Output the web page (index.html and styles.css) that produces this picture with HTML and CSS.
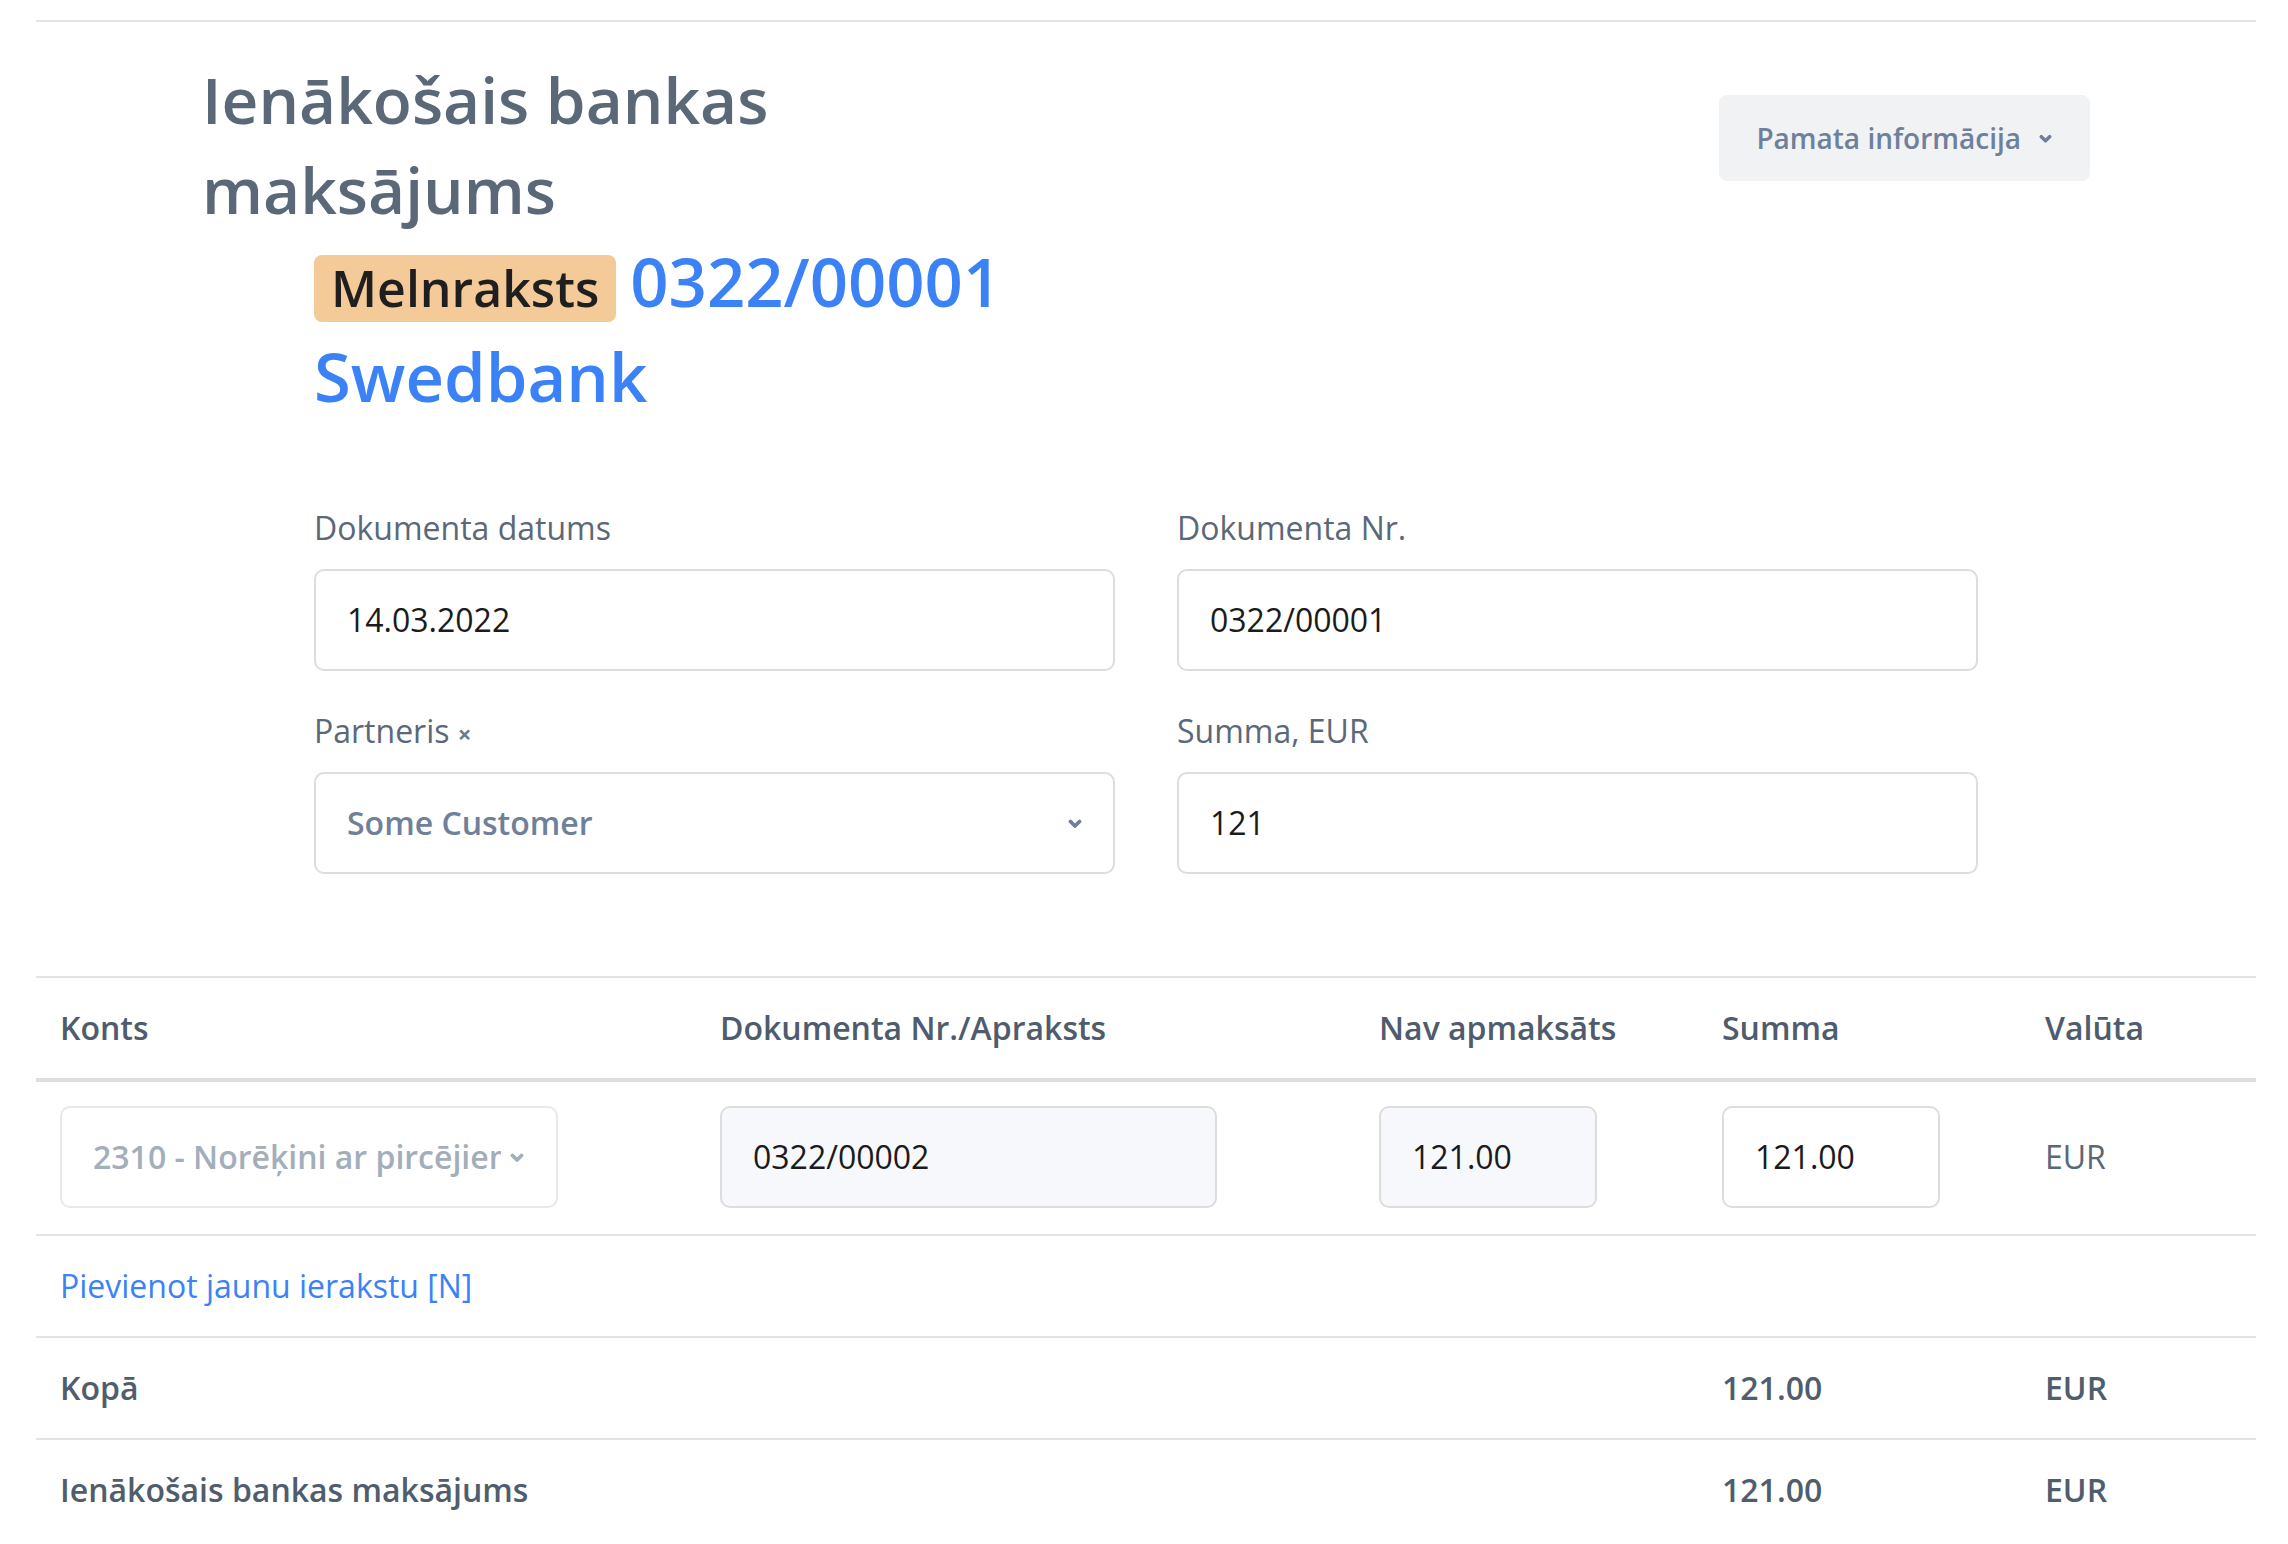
FILE: index.html
```html
<!DOCTYPE html>
<html lang="lv">
<head>
<meta charset="utf-8">
<title>Ienākošais bankas maksājums</title>
<link rel="stylesheet" href="styles.css">
</head>
<body>
<div class="page">
  <header class="page-head">
    <h1 class="title">Ienākošais bankas maksājums</h1>
    <button class="info-btn" type="button">
      <span>Pamata informācija</span>
      <svg class="chev chev-sm" viewBox="0 0 14 9" aria-hidden="true"><path d="M2.5 2.5l4.5 4.5 4.5-4.5"/></svg>
    </button>
  </header>

  <section class="doc">
    <div class="doc-title"><span class="badge">Melnraksts</span><span class="doc-no">0322/00001</span><span class="bank">Swedbank</span></div>

    <div class="form-grid">
      <div class="field">
        <div class="label">Dokumenta datums</div>
        <div class="input">14.03.2022</div>
      </div>
      <div class="field">
        <div class="label">Dokumenta Nr.</div>
        <div class="input">0322/00001</div>
      </div>
      <div class="field">
        <div class="label">Partneris <span class="clear">×</span></div>
        <div class="input select">
          <span class="select-value">Some Customer</span>
          <svg class="chev" viewBox="0 0 14 9" aria-hidden="true"><path d="M2.5 2.5l4.5 4.5 4.5-4.5"/></svg>
        </div>
      </div>
      <div class="field">
        <div class="label">Summa, EUR</div>
        <div class="input">121</div>
      </div>
    </div>
  </section>

  <div class="ledger">
    <div class="row head">
      <div class="cell">Konts</div>
      <div class="cell">Dokumenta Nr./Apraksts</div>
      <div class="cell">Nav apmaksāts</div>
      <div class="cell">Summa</div>
      <div class="cell">Valūta</div>
    </div>
    <div class="row line">
      <div class="cell">
        <div class="input small account">
          <span class="account-text">2310 - Norēķini ar pircējiem</span>
          <svg class="chev" viewBox="0 0 14 9" aria-hidden="true"><path d="M2.5 2.5l4.5 4.5 4.5-4.5"/></svg>
        </div>
      </div>
      <div class="cell">
        <div class="input small readonly w-doc">0322/00002</div>
      </div>
      <div class="cell">
        <div class="input small readonly w-num">121.00</div>
      </div>
      <div class="cell">
        <div class="input small w-num">121.00</div>
      </div>
      <div class="cell currency">EUR</div>
    </div>
    <div class="row add">
      <div class="cell span-all"><a class="add-link" href="#">Pievienot jaunu ierakstu [N]</a></div>
    </div>
    <div class="row total">
      <div class="cell">Kopā</div>
      <div class="cell"></div>
      <div class="cell"></div>
      <div class="cell">121.00</div>
      <div class="cell">EUR</div>
    </div>
    <div class="row total last">
      <div class="cell">Ienākošais bankas maksājums</div>
      <div class="cell"></div>
      <div class="cell"></div>
      <div class="cell">121.00</div>
      <div class="cell">EUR</div>
    </div>
  </div>
</div>
</body>
</html>
```

FILE: styles.css
```css
* {
  box-sizing: border-box;
}

body {
  margin: 0;
  background: #ffffff;
  font-family: "Open Sans", "Noto Sans", sans-serif;
  font-size: 32px;
  line-height: 48px;
  color: #5a6877;
}

.page {
  margin: 20px 32px 0 36px;
  border-top: 2px solid #e3e3e3;
}

/* Header */
.page-head {
  display: flex;
  justify-content: space-between;
  align-items: flex-start;
  padding: 33px 166px 0;
}

.title {
  margin: 0;
  max-width: 800px;
  font-size: 64px;
  line-height: 89.6px;
  font-weight: 600;
  color: #5a6877;
}

.info-btn {
  margin-top: 40px;
  height: 86px;
  display: inline-flex;
  align-items: center;
  gap: 18px;
  padding: 0 38px 0 37px;
  border: none;
  border-radius: 8px;
  background: #f1f2f4;
  font-family: inherit;
  font-size: 28px;
  line-height: 42px;
  font-weight: 600;
  color: #6e809a;
}

.chev {
  width: 14px;
  height: 9px;
  flex: none;
}

.chev path {
  fill: none;
  stroke: currentColor;
  stroke-width: 3.8;
  stroke-linecap: round;
  stroke-linejoin: round;
}

.chev-sm {
  width: 13px;
  height: 9px;
}

/* Document block */
.doc {
  padding: 0 278px;
}

.doc-title {
  font-size: 67px;
  line-height: 95px;
  font-weight: 600;
  color: #3b82f6;
}

.badge {
  display: inline-block;
  margin-right: 14px;
  padding: 0 17px;
  border-radius: 8px;
  background: #f4ca98;
  color: #1f1f1f;
  font-size: 50px;
  line-height: 67px;
}

.bank {
  display: block;
}

.form-grid {
  display: grid;
  grid-template-columns: 1fr 1fr;
  column-gap: 62px;
  row-gap: 36px;
  margin: 80px 0 102px;
}

.label {
  height: 48px;
  margin-bottom: 17px;
  color: #5a6877;
}

.clear {
  font-size: 24px;
  line-height: 1;
  font-weight: 700;
  color: #6b7a8f;
}

.input {
  height: 102px;
  display: flex;
  align-items: center;
  padding: 0 31px;
  border: 2px solid #dddddd;
  border-radius: 10px;
  background: #ffffff;
  color: #1b1b1b;
}

.select {
  justify-content: space-between;
  color: #6e809a;
}

.select-value {
  font-weight: 600;
}

/* Ledger table */
.ledger {
  border-top: 2px solid #e3e3e3;
}

.row {
  display: grid;
  grid-template-columns: 660px 659px 343px 323px 1fr;
  align-items: center;
  border-bottom: 2px solid #e3e3e3;
}

.row.head {
  border-bottom: 4px solid #dedede;
}

.row.last {
  border-bottom: none;
}

.cell {
  padding: 26px 24px;
  white-space: nowrap;
}

.row.head .cell {
  font-weight: 600;
  color: #4e5c6d;
}

.row.line .cell {
  padding: 24px 24px 26px;
}

.input.small {
  height: 102px;
}

.account {
  width: 498px;
  border-color: #e8e8e8;
  color: #a3aebb;
  padding-right: 32px;
}

.account-text {
  flex: 1;
  min-width: 0;
  overflow: hidden;
  font-weight: 600;
  margin-right: 9px;
}

.readonly {
  background: #f7f8fc;
}

.w-doc {
  width: 497px;
}

.w-num {
  width: 218px;
}

.currency {
  color: #5a6877;
}

.span-all {
  grid-column: 1 / -1;
}

.add-link {
  color: #3b82f6;
  text-decoration: none;
}

.row.total .cell {
  font-weight: 600;
  color: #4f5d6d;
}
```
